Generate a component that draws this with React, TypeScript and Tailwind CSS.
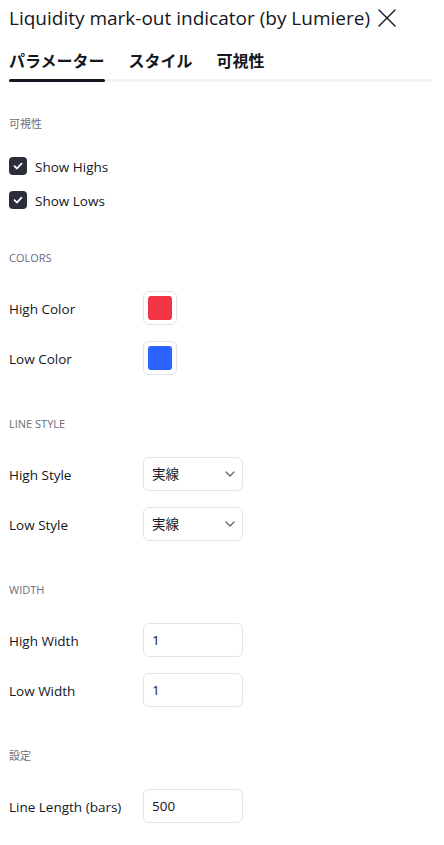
import React from "react";

const FONT = { fontFamily: '"Open Sans", "Noto Sans CJK JP", sans-serif' };

function SectionLabel({ children }: { children: React.ReactNode }) {
  return (
    <div className="h-[16px] flex items-center text-[11px] leading-[16px] text-[#6a6d78]">
      {children}
    </div>
  );
}

function Check({ label }: { label: string }) {
  return (
    <div className="h-[34px] flex items-center gap-[8px]">
      <div className="w-[18px] h-[18px] rounded-[4px] bg-[#2a2e39] flex items-center justify-center">
        <svg width="12" height="12" viewBox="0 0 12 12" fill="none">
          <path d="M2.5 6.2 L5 8.5 L9.5 3.6" stroke="#fff" strokeWidth="1.8" strokeLinecap="round" strokeLinejoin="round" />
        </svg>
      </div>
      <span className="text-[13.5px] leading-[20px] pt-[1px] text-[#131722]">{label}</span>
    </div>
  );
}

function Row({ label, children }: { label: string; children: React.ReactNode }) {
  return (
    <div className="h-[50px] flex items-center">
      <div className="w-[134px] text-[13.5px] leading-[20px] pt-[1px] text-[#131722]">{label}</div>
      {children}
    </div>
  );
}

function Swatch({ color }: { color: string }) {
  return (
    <div className="w-[34px] h-[34px] rounded-[6px] border border-[#e0e3eb] flex items-center justify-center">
      <div className="w-[24px] h-[24px] rounded-[3px]" style={{ backgroundColor: color }} />
    </div>
  );
}

function Select({ value }: { value: string }) {
  return (
    <div className="w-[100px] h-[34px] rounded-[6px] border border-[#e0e3eb] flex items-center justify-between pl-[8px] pr-[7px]">
      <span className="text-[13.5px] text-[#131722]">{value}</span>
      <svg width="10" height="6" viewBox="0 0 10 6" fill="none">
        <path d="M1 1 L5 5 L9 1" stroke="#5d606b" strokeWidth="1.2" strokeLinecap="round" strokeLinejoin="round" />
      </svg>
    </div>
  );
}

function Input({ value }: { value: string }) {
  return (
    <div className="w-[100px] h-[34px] rounded-[6px] border border-[#e0e3eb] flex items-center pl-[8px]">
      <span className="text-[13.5px] text-[#131722]">{value}</span>
    </div>
  );
}

export default function App() {
  return (
    <div className="w-[444px] h-[845px] bg-white overflow-hidden" style={FONT}>
      <div className="h-[36px] flex items-center px-[9px]">
        <div className="text-[19px] font-medium text-[#131722] whitespace-nowrap">
          Liquidity mark-out indicator (by Lumiere)
        </div>
        <svg className="ml-[7px]" width="20" height="20" viewBox="0 0 20 20" fill="none">
          <path d="M2 2 L18 18 M18 2 L2 18" stroke="#131722" strokeWidth="1.4" strokeLinecap="round" />
        </svg>
      </div>
      <div className="px-[9px]">
        <div className="flex gap-[24px] pt-[14px] pb-[7px]">
          <div className="h-[22px] flex items-center text-[16px] font-bold text-[#131722]">パラメーター</div>
          <div className="h-[22px] flex items-center text-[16px] font-bold text-[#131722]">スタイル</div>
          <div className="h-[22px] flex items-center text-[16px] font-bold text-[#131722]">可視性</div>
        </div>
        <div className="h-[3px] w-[422px] bg-[#f2f2f2] rounded-full">
          <div className="h-[3px] w-[96px] bg-[#131722] rounded-full" />
        </div>

        <div className="mt-[34px]">
          <SectionLabel>可視性</SectionLabel>
          <div className="mt-[17px]">
            <Check label="Show Highs" />
            <Check label="Show Lows" />
          </div>
        </div>

        <div className="mt-[33px]">
          <SectionLabel>COLORS</SectionLabel>
          <div className="mt-[17px]">
            <Row label="High Color"><Swatch color="#f23645" /></Row>
            <Row label="Low Color"><Swatch color="#2962ff" /></Row>
          </div>
        </div>

        <div className="mt-[33px]">
          <SectionLabel>LINE STYLE</SectionLabel>
          <div className="mt-[17px]">
            <Row label="High Style"><Select value="実線" /></Row>
            <Row label="Low Style"><Select value="実線" /></Row>
          </div>
        </div>

        <div className="mt-[33px]">
          <SectionLabel>WIDTH</SectionLabel>
          <div className="mt-[17px]">
            <Row label="High Width"><Input value="1" /></Row>
            <Row label="Low Width"><Input value="1" /></Row>
          </div>
        </div>

        <div className="mt-[33px]">
          <SectionLabel>設定</SectionLabel>
          <div className="mt-[17px]">
            <Row label="Line Length (bars)"><Input value="500" /></Row>
          </div>
        </div>
      </div>
    </div>
  );
}
